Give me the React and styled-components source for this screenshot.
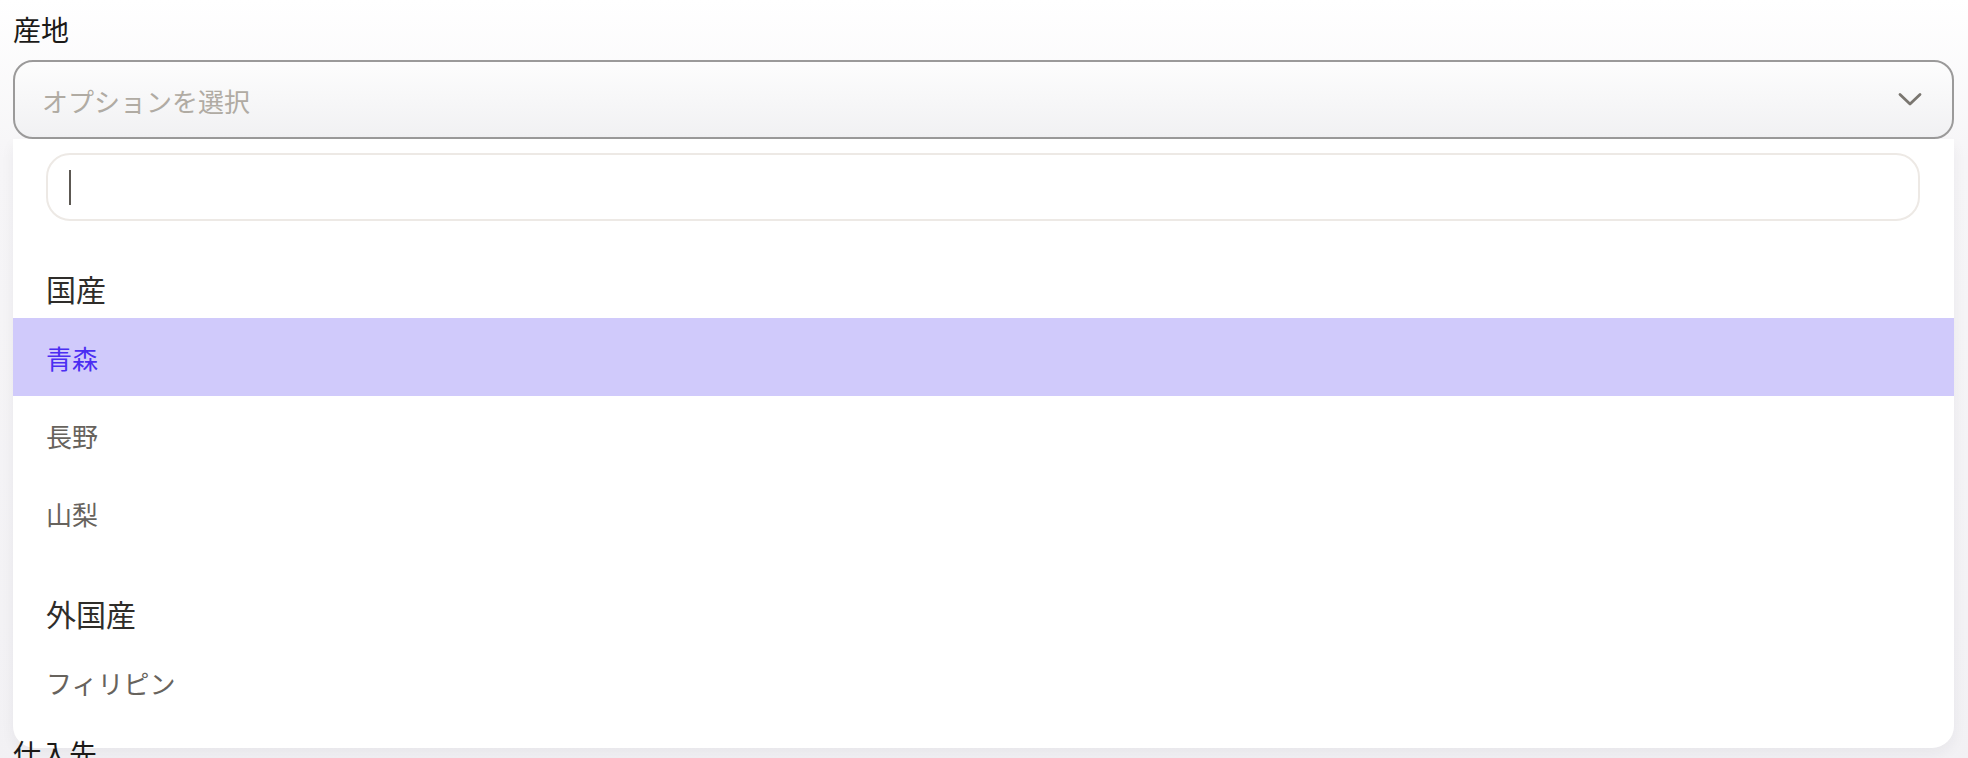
import styled, { createGlobalStyle } from "styled-components";

const GlobalStyle = createGlobalStyle`
  html, body {
    margin: 0;
    padding: 0;
  }
  body {
    min-height: 758px;
    background: linear-gradient(180deg, #ffffff 0px, #f6f5f7 160px, #f2f1f4 100%);
    font-family: "Noto Sans CJK JP", "Noto Sans", sans-serif;
    overflow: hidden;
  }
`;

const Form = styled.div`
  display: flex;
  flex-direction: column;
  padding: 10px 14px 0 13px;
`;

const Field = styled.div`
  position: relative;
  display: flex;
  flex-direction: column;
  gap: 11px;
  margin-top: ${(p) => (p.$offset ? `${p.$offset}px` : "0")};
`;

const Label = styled.label`
  position: relative;
  z-index: 2;
  font-size: 28px;
  line-height: 39px;
  color: #1b1a18;
`;

const SelectBox = styled.div`
  height: 79px;
  box-sizing: border-box;
  border: 2px solid #9b9a9a;
  border-radius: 20px;
  background: linear-gradient(180deg, #fdfdfd 0%, #f1f1f3 100%);
  display: flex;
  align-items: center;
  justify-content: space-between;
  padding: 0 30px 0 27px;
`;

const Placeholder = styled.span`
  font-size: 26px;
  color: #b0aba3;
  padding-top: 2px;
`;

const Panel = styled.div`
  position: absolute;
  top: 129px;
  left: 0;
  right: 0;
  z-index: 1;
  background: #ffffff;
  border-radius: 0 0 22px 22px;
  box-shadow: 0 6px 14px rgba(40, 30, 60, 0.05);
  padding: 14px 0 27px;
`;

const SearchBox = styled.div`
  margin: 0 34px 6px 33px;
  height: 68px;
  box-sizing: border-box;
  border: 2px solid #ede9e5;
  border-radius: 24px;
  display: flex;
  align-items: center;
  padding-left: 21px;
`;

const Caret = styled.span`
  width: 2px;
  height: 35px;
  background: #5c5852;
`;

const GroupHeader = styled.div`
  padding: 41px 33px 10px;
  font-size: 30px;
  line-height: 40px;
  color: #2f2d2a;
`;

const Option = styled.div`
  height: 78px;
  display: flex;
  align-items: center;
  padding-left: 33px;
  font-size: 26px;
  color: ${(p) => (p.$active ? "#4b2ef2" : "#67635d")};
  background: ${(p) => (p.$active ? "#d0cafb" : "transparent")};
`;

const Chevron = () => (
  <svg width="24" height="15" viewBox="0 0 24 15" fill="none">
    <polyline
      points="2,2.5 12,12 22,2.5"
      stroke="#7a7670"
      strokeWidth="2.8"
      strokeLinecap="round"
      strokeLinejoin="round"
    />
  </svg>
);

const groups = [
  { name: "国産", items: ["青森", "長野", "山梨"] },
  { name: "外国産", items: ["フィリピン"] },
];

export default function App() {
  return (
    <>
      <GlobalStyle />
      <Form>
        <Field>
          <Label>産地</Label>
          <SelectBox>
            <Placeholder>オプションを選択</Placeholder>
            <Chevron />
          </SelectBox>
          <Panel>
            <SearchBox>
              <Caret />
            </SearchBox>
            {groups.map((g) => (
              <div key={g.name}>
                <GroupHeader>{g.name}</GroupHeader>
                {g.items.map((item) => (
                  <Option key={item} $active={item === "青森"}>
                    {item}
                  </Option>
                ))}
              </div>
            ))}
          </Panel>
        </Field>
        <Field $offset={595}>
          <Label>仕入先</Label>
        </Field>
      </Form>
    </>
  );
}
